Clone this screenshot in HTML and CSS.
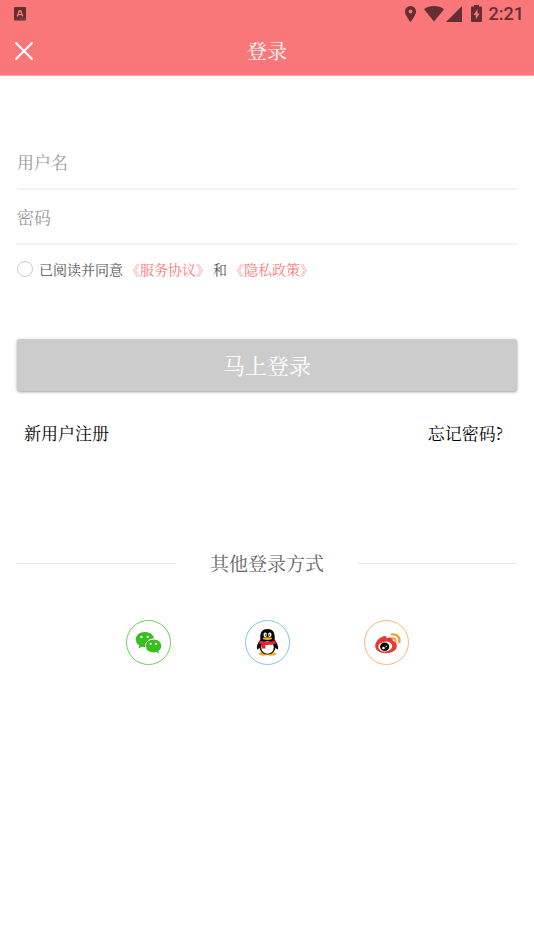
FILE: index.html
```html
<!DOCTYPE html>
<html lang="zh-CN">
<head>
<meta charset="utf-8">
<meta name="viewport" content="width=device-width, initial-scale=1">
<title>登录</title>
<link rel="stylesheet" href="styles.css">
</head>
<body>
<header class="top">
  <div class="status">
    <svg class="keyboard" width="12" height="14" viewBox="0 0 12 14" aria-hidden="true">
      <rect width="12" height="13.5" rx="1.2" fill="#642e32"/>
      <path d="M3.3 9.5 5.3 3.7h1.4l2 5.8M4.2 7.6h3.6" fill="none" stroke="#f97779" stroke-width="1.4"/>
      <path d="M6.3 11.8h1M8.2 11.8h1M10 11.8h1" stroke="#c05a5f" stroke-width="1"/>
    </svg>
    <div class="indicators">
      <svg width="11" height="16" viewBox="0 0 11 16" aria-hidden="true"><path fill="#642e32" fill-rule="evenodd" d="M5.500 0A5.400 5.400 0 0 0 0 5.500C0 9.600 5.500 16 5.500 16S11 9.600 11 5.500A5.400 5.400 0 0 0 5.500 0Zm0 3.600a1.900 1.900 0 1 1 0 3.800 1.900 1.900 0 0 1 0-3.800Z"/></svg>
      <svg class="wifi" width="20" height="16" viewBox="0 0 20 16" aria-hidden="true"><path fill="#642e32" d="M0 3.200C2.800 1 6.200 0 10 0s7.200 1 10 3.200L10 15.500Z"/></svg>
      <svg class="signal" width="16" height="16" viewBox="0 0 16 16" aria-hidden="true"><path fill="#642e32" d="M16 0v16H0Z"/></svg>
      <svg class="battery" width="11" height="17" viewBox="0 0 11 17" aria-hidden="true"><path fill="#642e32" d="M3 0h5v1.600h2q1 0 1 1V16q0 1-1 1H1q-1 0-1-1V2.600q0-1 1-1h2Z"/><path fill="#f97779" d="M6.500 4 2.500 10h2.300v4.500L8.600 8.400H6.500Z"/></svg>
      <span class="clock">2:21</span>
    </div>
  </div>
  <div class="bar">
    <button class="close" type="button" aria-label="关闭">
      <svg width="18" height="18" viewBox="0 0 18 18" aria-hidden="true"><path d="m1 1 16 16M17 1 1 17" stroke="#fff" stroke-width="2" stroke-linecap="round"/></svg>
    </button>
    <h1 class="title">登录</h1>
  </div>
</header>
<main class="content">
  <form class="login">
    <input class="field" type="text" placeholder="用户名" aria-label="用户名">
    <input class="field" type="password" placeholder="密码" aria-label="密码">
    <div class="agree">
      <input class="check" type="checkbox" id="agree">
      <label for="agree">已阅读并同意</label>
      <a href="#terms">《服务协议》</a>
      <span>和</span>
      <a href="#privacy">《隐私政策》</a>
    </div>
    <button class="submit" type="button">马上登录</button>
  </form>
  <nav class="links">
    <a href="#register">新用户注册</a>
    <a href="#forgot">忘记密码?</a>
  </nav>
  <section class="other">
    <h2 class="divider">其他登录方式</h2>
    <div class="social">
      <button class="round wechat" type="button" aria-label="微信">
        <svg width="43" height="43" viewBox="1 1 43 43" aria-hidden="true">
          <path fill="#39be20" d="M18.800 12C13.500 12 9.800 15.200 9.800 19.500c0 2.600 1.300 4.600 3.500 6l-.9 3 3.500-1.800c1.500.4 3.100.5 4.700.3-1-5.500 3.500-8.800 7.500-8.600C27.200 14.600 23.500 12 18.800 12Z"/>
          <path fill="#39be20" d="M27.500 19.600c-4.600 0-7.900 2.800-7.900 6.400 0 3.700 3.400 6.400 7.900 6.400 1 0 1.900-.1 2.800-.4l2.700 1.500-.7-2.500c1.900-1.200 3-2.900 3-5 0-3.600-3.300-6.400-7.800-6.400Z"/>
          <path fill="none" stroke="#fff" stroke-width=".7" d="M20.200 28.500c-2.300-4.500 1.500-9.500 7.300-9.500"/>
          <g fill="#fff"><circle cx="15.500" cy="17" r="1.200"/><circle cx="21.700" cy="17" r="1.200"/><circle cx="24.700" cy="23.800" r="1.100"/><circle cx="30" cy="23.800" r="1.100"/></g>
        </svg>
      </button>
      <button class="round qq" type="button" aria-label="QQ">
        <svg width="43" height="43" viewBox="1 1 43 43" aria-hidden="true">
          <ellipse cx="18.500" cy="33.800" rx="4.500" ry="1.900" fill="#f8ab18"/><ellipse cx="26.500" cy="33.800" rx="4.500" ry="1.900" fill="#f8ab18"/>
          <path fill="#080808" d="M22.500 9c-5 0-7.400 3.500-7.200 8.200v2.500c-1.700 2.200-3.900 5.900-3.300 9.100.3 1.300 1.300.4 2.400-1.300.8 4.200 3.700 7 8.100 7s7.300-2.800 8.100-7c1.100 1.700 2.100 2.600 2.400 1.300.6-3.200-1.600-6.900-3.300-9.100v-2.500C29.900 12.500 27.500 9 22.500 9Z"/>
          <ellipse cx="22.500" cy="27.500" rx="6.300" ry="6.200" fill="#fff"/>
          <path fill="#e8242d" d="M14.600 20.500q7.900 2.600 15.800 0l.6 3q-5 1.800-10.600 1.500v3.600h-3.600v-4.200q-1.500-.4-2.700-1Z"/>
          <ellipse cx="20.200" cy="14.800" rx="1.700" ry="2.400" fill="#fff"/><ellipse cx="24.800" cy="14.800" rx="1.700" ry="2.400" fill="#fff"/>
          <circle cx="20.700" cy="15" r=".7"/><circle cx="24.300" cy="15" r=".7"/>
          <ellipse cx="22.500" cy="18.600" rx="4.700" ry="1.400" fill="#f8ab18"/>
        </svg>
      </button>
      <button class="round weibo" type="button" aria-label="微博">
        <svg width="43" height="43" viewBox="1 1 43 43" aria-hidden="true">
          <path fill="#e53a31" d="M19.500 16.300c2-.7 3.500.3 2.900 2 2.600-1.200 7-1.500 6.300 1.500-.2.800-.1 1 .6 1.300 2.400.8 3.500 2.700 3.500 5 0 4.300-5 7.200-10.900 7.200-6.300 0-10.700-2.900-10.700-7.500 0-3.700 3.900-8.200 8.300-9.500Z"/>
          <ellipse cx="21.300" cy="26.600" rx="7" ry="5" transform="rotate(-6 21.300 26.600)" fill="#fff"/>
          <ellipse cx="20.700" cy="26.800" rx="4.600" ry="4.200" fill="#080808"/>
          <circle cx="19.500" cy="28" r="1.300" fill="#fff"/><circle cx="22.200" cy="26.200" r=".7" fill="#fff"/>
          <g fill="none" stroke="#f69a3c" stroke-linecap="round"><path d="M28 14.400c4.900-.8 8.500 3.200 7.300 7.800" stroke-width="2.300"/><path d="M28.100 18.300c2.300-.5 4 1.300 3.500 3.400" stroke-width="1.900"/></g>
        </svg>
      </button>
    </div>
  </section>
</main>
</body>
</html>
```
FILE: styles.css
```css
* {
  box-sizing: border-box;
}

body {
  margin: 0;
  background: #fff;
  color: #000;
  font-family: "Noto Serif CJK SC", "Noto Serif SC", "Noto Sans CJK SC", serif;
  font-size: 17px;
}

button,
input {
  font: inherit;
}

a {
  color: inherit;
  text-decoration: none;
}

svg {
  display: block;
}

.top {
  background: #f97779;
  border-bottom: 1px solid #f9a0a3;
}

.status {
  display: flex;
  align-items: center;
  justify-content: space-between;
  height: 27px;
  padding: 0 10px 0 14px;
}

.indicators {
  display: flex;
  align-items: center;
}

.wifi {
  margin-left: 8px;
}

.signal {
  margin-left: 2px;
}

.battery {
  margin-left: 9px;
}

.clock {
  margin-left: 7px;
  color: #642e32;
  font-family: Roboto, sans-serif;
  font-size: 18px;
  font-weight: 500;
  line-height: 28px;
}

.bar {
  display: grid;
  grid-template-columns: 48px 1fr 48px;
  align-items: center;
  height: 48px;
}

.close {
  display: grid;
  place-items: center;
  height: 48px;
  padding: 0;
  border: 0;
  background: none;
}

.title {
  margin: 0;
  color: #fff;
  font-size: 20px;
  font-weight: 400;
  line-height: 48px;
  text-align: center;
}

.content {
  padding: 59px 17px 24px;
}

.field {
  display: block;
  width: 100%;
  height: 55px;
  padding: 0;
  border: 0;
  border-bottom: 2px solid #f3f3f3;
  border-radius: 0;
  outline: 0;
  background: none;
}

.field::placeholder {
  color: #999;
  opacity: 1;
}

.agree {
  display: flex;
  align-items: center;
  gap: 3px;
  height: 48px;
  color: #555;
  font-size: 14px;
  line-height: 20px;
}

.agree a {
  color: #f97779;
}

.check {
  width: 16px;
  height: 16px;
  margin: 0 3px 0 0;
  border: 1px solid #ccc;
  border-radius: 50%;
  appearance: none;
}

.check:checked {
  background: #f97779;
}

.submit {
  display: block;
  width: 100%;
  height: 52px;
  margin-top: 46px;
  padding: 0 0 2px;
  border: 0;
  border-radius: 3px;
  background: #ccc;
  box-shadow: 0 1px 3px rgba(0, 0, 0, 0.4);
  color: #fff;
  font-size: 22px;
}

.links {
  display: flex;
  justify-content: space-between;
  margin-top: 30px;
  padding: 0 14px 0 7px;
  line-height: 24px;
}

.divider {
  display: flex;
  align-items: center;
  gap: 34px;
  margin: 104px 0 0;
  color: #666;
  font-size: 19px;
  font-weight: 400;
  line-height: 28px;
}

.divider::before,
.divider::after {
  content: "";
  flex: 1;
  height: 1px;
  background: #e8e8e8;
}

.social {
  display: flex;
  justify-content: center;
  gap: 74px;
  margin-top: 43px;
}

.round {
  display: grid;
  place-items: center;
  width: 45px;
  height: 45px;
  padding: 0;
  border: 1px solid;
  border-radius: 50%;
  background: #fff;
}

.wechat {
  border-color: #6bd05a;
}

.qq {
  border-color: #83c5ed;
}

.weibo {
  border-color: #f9b77c;
}
```
